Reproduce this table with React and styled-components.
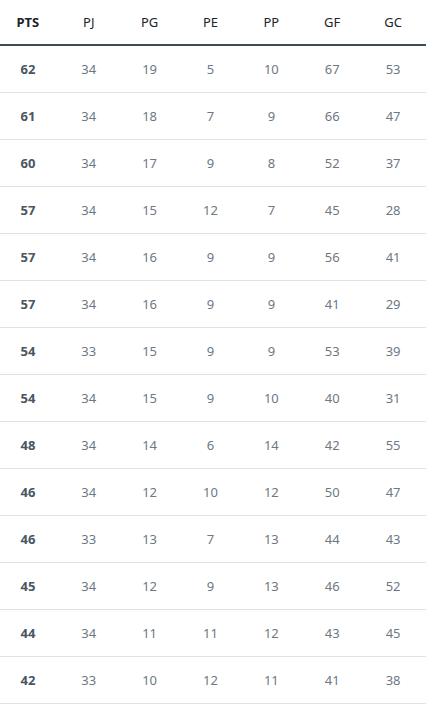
import React from "react";
import styled, { createGlobalStyle } from "styled-components";

const Global = createGlobalStyle`
    html, body {
        margin: 0;
        padding: 0;
        background: #ffffff;
    }
    body {
        font-family: "Noto Sans", "Open Sans", sans-serif;
        -webkit-font-smoothing: antialiased;
    }
`

const Table = styled.div`
    width: 426px;
`

const Row = styled.div`
    display: grid;
    grid-template-columns: repeat(7, 1fr);
    align-items: center;
    height: ${({ head }) => (head ? "44px" : "46px")};
    border-bottom: ${({ head }) => (head ? "2px solid #3d4a57" : "1px solid #dde3e8")};
`

const Cell = styled.div`
    text-align: center;
    padding-right: 5px;
    font-size: 13px;
    line-height: 1;
    color: ${({ head, main }) => (head ? "#1c2329" : main ? "#4a5662" : "#6e7882")};
    font-weight: ${({ main }) => (main ? 700 : 400)};
`

const columns = ["PTS", "PJ", "PG", "PE", "PP", "GF", "GC"];

const rows = [
    [62, 34, 19, 5, 10, 67, 53],
    [61, 34, 18, 7, 9, 66, 47],
    [60, 34, 17, 9, 8, 52, 37],
    [57, 34, 15, 12, 7, 45, 28],
    [57, 34, 16, 9, 9, 56, 41],
    [57, 34, 16, 9, 9, 41, 29],
    [54, 33, 15, 9, 9, 53, 39],
    [54, 34, 15, 9, 10, 40, 31],
    [48, 34, 14, 6, 14, 42, 55],
    [46, 34, 12, 10, 12, 50, 47],
    [46, 33, 13, 7, 13, 44, 43],
    [45, 34, 12, 9, 13, 46, 52],
    [44, 34, 11, 11, 12, 43, 45],
    [42, 33, 10, 12, 11, 41, 38],
];

export default function App() {
    return (
        <>
            <Global />
            <Table>
                <Row head>
                    {columns.map((c, i) => (
                        <Cell head main={i === 0} key={c}>{c}</Cell>
                    ))}
                </Row>
                {rows.map((r, i) => (
                    <Row key={i}>
                        {r.map((v, j) => (
                            <Cell main={j === 0} key={j}>{v}</Cell>
                        ))}
                    </Row>
                ))}
            </Table>
        </>
    );
}
